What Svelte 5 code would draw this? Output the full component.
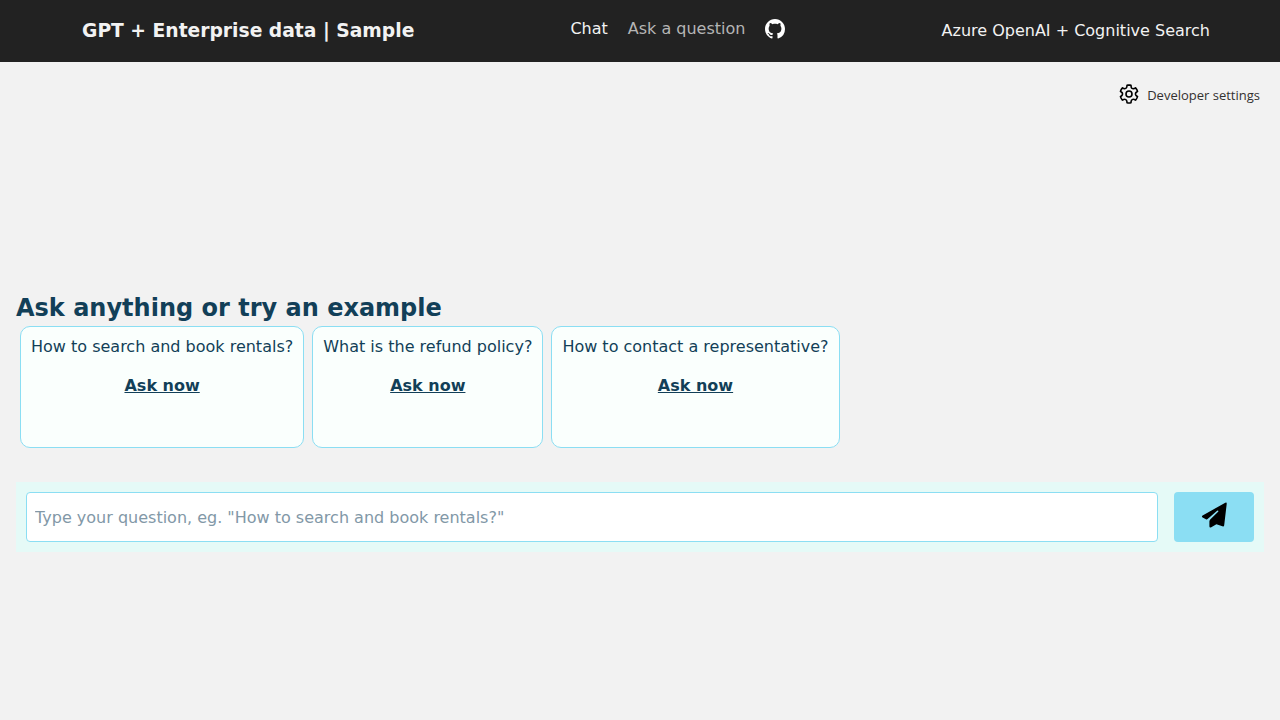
<script>
  const examples = [
    'How to search and book rentals?',
    'What is the refund policy?',
    'How to contact a representative?'
  ];

  const gear =
    'M12.0122 2.25C12.7462 2.25846 13.4773 2.34326 14.1937 2.50304C14.5064 2.57279 14.7403 2.83351 14.7758 3.15196L14.946 4.67881C15.0231 5.37986 15.615 5.91084 16.3206 5.91158C16.5103 5.91188 16.6979 5.87238 16.8732 5.79483L18.2738 5.17956C18.5651 5.05159 18.9055 5.12136 19.1229 5.35362C20.1351 6.43464 20.8889 7.73115 21.3277 9.14558C21.4223 9.45058 21.3134 9.78203 21.0564 9.9715L19.8149 10.8866C19.4607 11.1468 19.2516 11.56 19.2516 11.9995C19.2516 12.4389 19.4607 12.8521 19.8157 13.1129L21.0582 14.0283C21.3153 14.2177 21.4243 14.5492 21.3297 14.8543C20.8911 16.2685 20.1377 17.5649 19.1261 18.6461C18.9089 18.8783 18.5688 18.9483 18.2775 18.8206L16.8712 18.2045C16.4688 18.0284 16.0068 18.0542 15.6265 18.274C15.2463 18.4937 14.9933 18.8812 14.945 19.3177L14.7759 20.8444C14.741 21.1592 14.5122 21.4182 14.204 21.4915C12.7556 21.8361 11.2465 21.8361 9.79803 21.4915C9.48991 21.4182 9.26105 21.1592 9.22618 20.8444L9.05736 19.32C9.00777 18.8843 8.75434 18.498 8.37442 18.279C7.99451 18.06 7.5332 18.0343 7.1322 18.2094L5.72557 18.8256C5.43422 18.9533 5.09403 18.8833 4.87678 18.6509C3.86462 17.5685 3.11119 16.2705 2.6732 14.8548C2.57886 14.5499 2.68786 14.2186 2.94485 14.0293L4.18818 13.1133C4.54232 12.8531 4.75147 12.4399 4.75147 12.0005C4.75147 11.561 4.54232 11.1478 4.18771 10.8873L2.94516 9.97285C2.6878 9.78345 2.5787 9.45178 2.67337 9.14658C3.11212 7.73215 3.86594 6.43564 4.87813 5.35462C5.09559 5.12236 5.43594 5.05259 5.72724 5.18056L7.12762 5.79572C7.53056 5.97256 7.9938 5.94585 8.37577 5.72269C8.75609 5.50209 9.00929 5.11422 9.05817 4.67764L9.22824 3.15196C9.26376 2.83335 9.49786 2.57254 9.8108 2.50294C10.5281 2.34342 11.26 2.25865 12.0122 2.25Z';

  let question = $state('');

  function ask(text) {
    question = text;
  }
</script>

<div class="page">
  <header>
    <h3>GPT + Enterprise data | Sample</h3>
    <nav aria-label="Main">
      <a class="active" href="#chat">Chat</a>
      <a href="#ask">Ask a question</a>
      <a class="github" href="#github" aria-label="Github repository">
        <svg width="20" height="20" viewBox="0 0 16 16" aria-hidden="true">
          <path fill="#fff" d="M8 0C3.58 0 0 3.58 0 8c0 3.54 2.29 6.53 5.47 7.59.4.07.55-.17.55-.38 0-.19-.01-.82-.01-1.49-2.01.37-2.53-.49-2.69-.94-.09-.23-.48-.94-.82-1.13-.28-.15-.68-.52-.01-.53.63-.01 1.08.58 1.23.82.72 1.21 1.87.87 2.33.66.07-.52.28-.87.51-1.07-1.78-.2-3.64-.89-3.64-3.95 0-.87.31-1.59.82-2.15-.08-.2-.36-1.02.08-2.12 0 0 .67-.21 2.2.82.64-.18 1.32-.27 2-.27s1.36.09 2 .27c1.53-1.04 2.2-.82 2.2-.82.44 1.1.16 1.92.08 2.12.51.56.82 1.27.82 2.15 0 3.07-1.87 3.75-3.65 3.95.29.25.54.73.54 1.48 0 1.07-.01 1.93-.01 2.2 0 .21.15.46.55.38A8.01 8.01 0 0 0 16 8c0-4.42-3.58-8-8-8z" />
        </svg>
      </a>
    </nav>
    <p>Azure OpenAI + Cognitive Search</p>
  </header>

  <main>
    <div class="toolbar">
      <button class="settings" type="button">
        <svg width="24" height="24" viewBox="0 0 24 24" fill="none" stroke="#000" aria-hidden="true">
          <clipPath id="gear-outline"><path d={gear} /></clipPath>
          <path d={gear} stroke-width="3.2" clip-path="url(#gear-outline)" />
          <circle cx="12" cy="12" r="3" stroke-width="1.6" />
        </svg>
        <span>Developer settings</span>
      </button>
    </div>

    <section class="chat">
      <h2>Ask anything or try an example</h2>
      <ul>
        {#each examples as example}
          <li>
            <button type="button" onclick={() => ask(example)}>
              <span>{example}</span>
              <strong>Ask now</strong>
            </button>
          </li>
        {/each}
      </ul>

      <form onsubmit={(event) => event.preventDefault()}>
        <input
          type="text"
          aria-label="Question"
          placeholder={'Type your question, eg. "How to search and book rentals?"'}
          bind:value={question}
        />
        <button type="submit" aria-label="Ask question">
          <svg width="26" height="26" viewBox="0 0 26 26" aria-hidden="true">
            <path d="M24.3.8Q25.9 0 25.7 1.9L23.2 23.2Q23 24.8 21.4 24.3L15.4 22.3 10.3 25.2Q8.4 26 8.4 24.2V19.4Q8.4 18.5 9.2 17.6L17.4 9.6Q17.5 8.2 16.1 8.7L6.6 17.1Q5.8 17.8 4.9 17.3L1.6 15.6Q.2 14.5 1.6 13.4Z" />
          </svg>
        </button>
      </form>
    </section>
  </main>
</div>

<style>
  :global(body) {
    margin: 0;
    background: #f2f2f2;
  }

  .page,
  button,
  input {
    box-sizing: border-box;
    font-family: 'DejaVu Sans', sans-serif;
    font-size: 16px;
    line-height: 19px;
  }

  .page {
    min-height: 100vh;
    color: #123f58;
  }

  header {
    display: flex;
    flex-wrap: wrap;
    align-items: center;
    justify-content: space-around;
    box-sizing: border-box;
    min-height: 62px;
    padding-bottom: 2px;
    background: #222;
    color: #f2f2f2;
  }

  h3,
  h2,
  p,
  ul {
    margin: 0;
    padding: 0;
  }

  h3 {
    padding: 2px 0 0 12px;
    line-height: 24px;
  }

  nav {
    display: flex;
    align-items: center;
    gap: 20px;
    padding: 0 16px 4px;
  }

  nav a {
    color: #b5b5b5;
    text-decoration: none;
  }

  nav a.active {
    color: #f2f2f2;
  }

  .github,
  .github svg {
    display: block;
  }

  .github {
    padding-top: 2px;
  }

  .toolbar {
    display: flex;
    justify-content: flex-end;
    padding: 20px 20px 0;
  }

  button {
    border: 0;
    cursor: pointer;
  }

  .settings {
    display: flex;
    align-items: center;
    gap: 6px;
    padding: 0;
    background: transparent;
    color: #323130;
    font-family: 'Open Sans', sans-serif;
    font-size: 13px;
  }

  .settings span {
    padding-top: 2px;
  }

  .chat {
    padding: 188px 16px 0;
  }

  h2 {
    font-size: 24px;
    line-height: 28px;
  }

  ul {
    display: flex;
    flex-wrap: wrap;
    gap: 8px;
    padding: 4px 4px 0;
    list-style: none;
  }

  li button {
    display: flex;
    flex-direction: column;
    align-items: center;
    gap: 20px;
    min-height: 122px;
    padding: 10px;
    border: 1px solid #8bdef3;
    border-radius: 10px;
    background: #fafffd;
    color: inherit;
  }

  strong {
    text-decoration: underline;
  }

  form {
    display: flex;
    gap: 16px;
    margin-top: 34px;
    padding: 10px;
    background: #e5faf7;
  }

  input {
    flex: 1;
    min-width: 0;
    height: 50px;
    padding: 0 8px;
    border: 1px solid #8bdef3;
    border-radius: 4px;
    background: #fff;
    color: #123f58;
  }

  input::placeholder {
    color: #8298a7;
    opacity: 1;
  }

  form button {
    display: flex;
    align-items: center;
    justify-content: center;
    width: 80px;
    padding: 0 0 4px;
    border-radius: 4px;
    background: #8bdef3;
  }
</style>
